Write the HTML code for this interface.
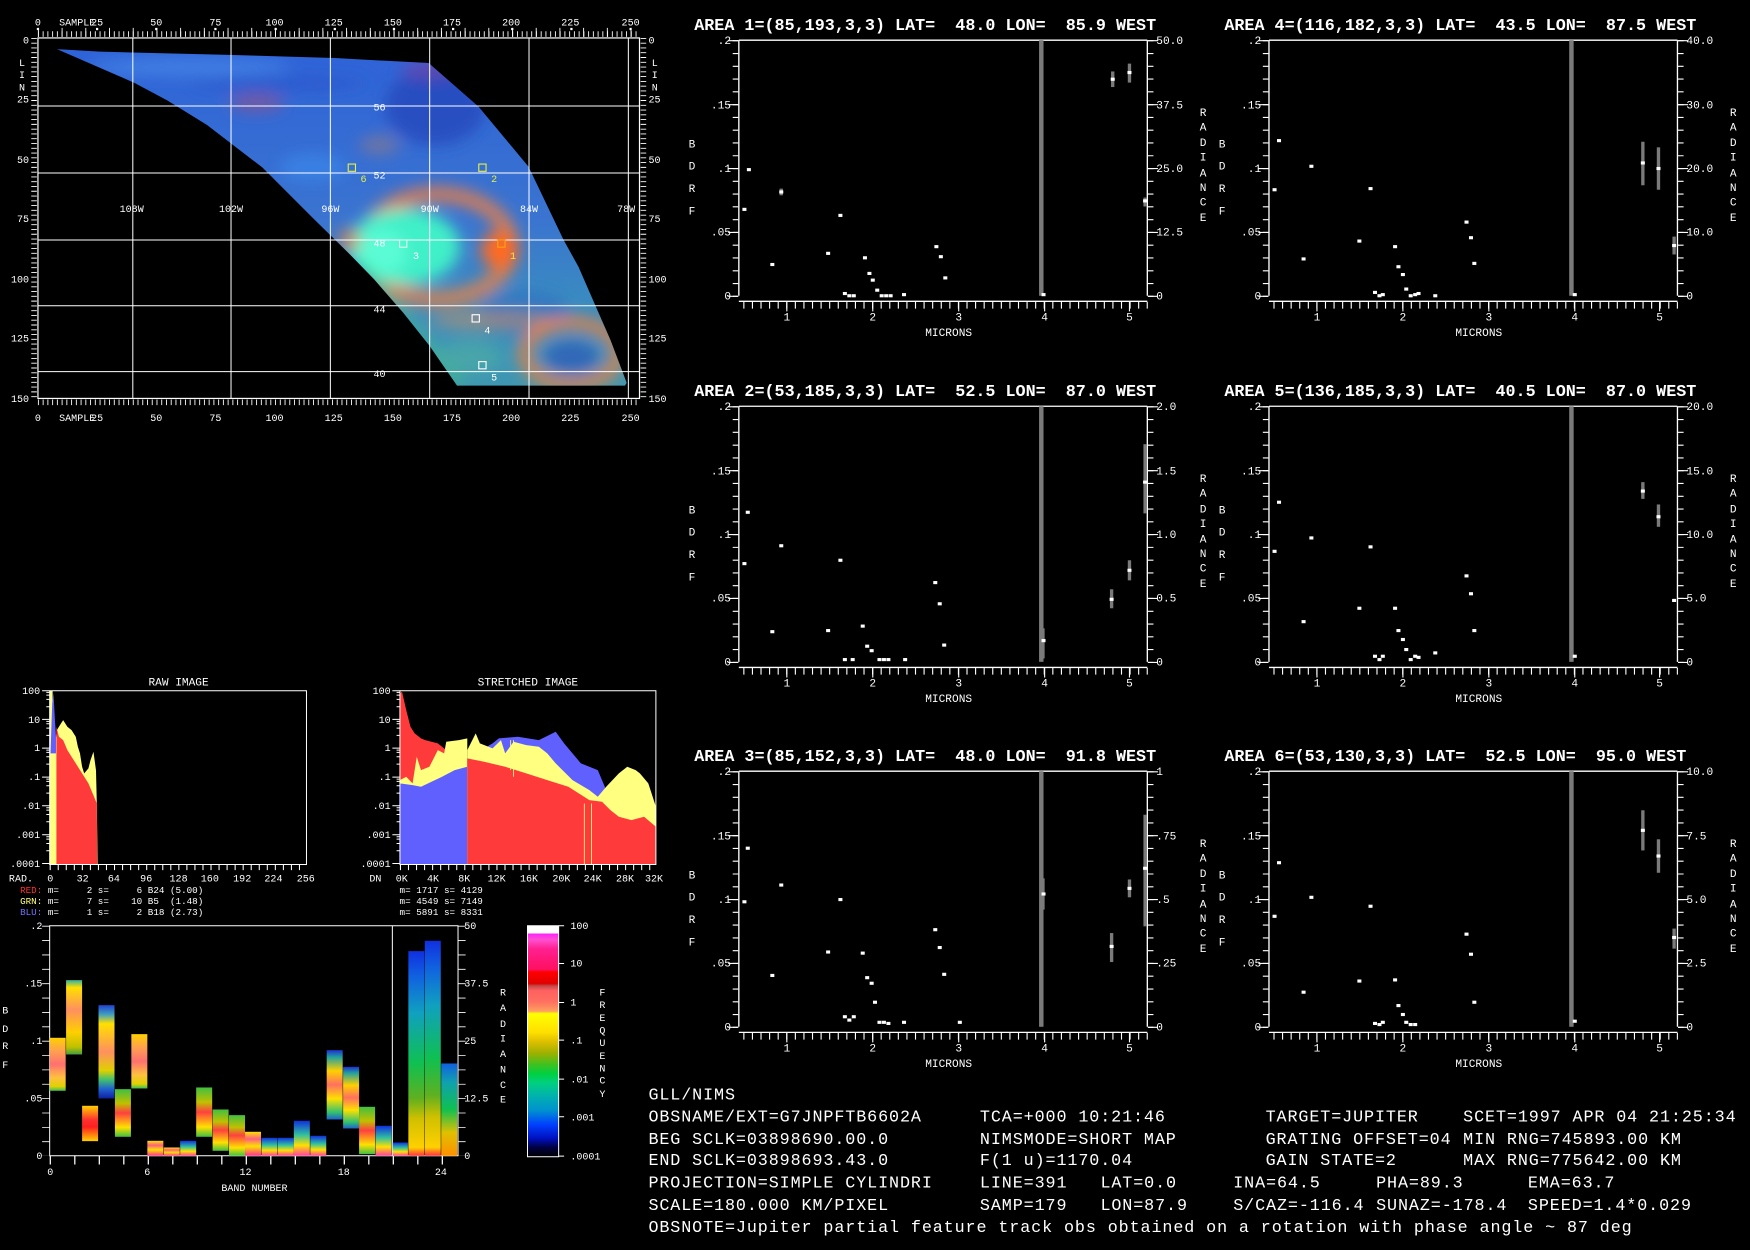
<!DOCTYPE html>
<html><head><meta charset="utf-8"><style>
html,body{margin:0;padding:0;background:#000;overflow:hidden}
svg{display:block}
text{font-family:"Liberation Mono",monospace;fill:#fff;white-space:pre}
.s{font-size:9px}
.m{font-size:10px}
.t{font-size:15px;font-weight:bold}
.b{font-size:15px}
</style></head><body>
<svg width="1750" height="1250" viewBox="0 0 1568 1120" preserveAspectRatio="none" xmlns="http://www.w3.org/2000/svg" xml:space="preserve">
<defs>
<filter id="bl" x="-50%" y="-50%" width="200%" height="200%"><feGaussianBlur stdDeviation="7"/></filter>
<clipPath id="cres"><path d="M51,44 L89.6,46.3 200,49 300,52 384,56.5 428.8,95.6 473.6,149.4 505,215 518.3,239 547,304.7 561.5,343 560,345.5 409.5,345.5 385,310 361.5,280.5 335,250 313.6,228 281,196 235,150 185.5,112 150,90 120,74 Z"/></clipPath>
<linearGradient id="mapg" gradientUnits="userSpaceOnUse" x1="0" y1="40" x2="0" y2="350">
<stop offset="0" stop-color="#2e62d8"/><stop offset=".5" stop-color="#3a74d0"/><stop offset=".75" stop-color="#3a8cc0"/><stop offset="1" stop-color="#3e98b0"/></linearGradient>
<rect id="pt" x="-1.8" y="-1.4" width="3.6" height="2.8" fill="#fff"/>
<g id="pf" stroke="#fff" fill="none">
<path d="M662,36H1028M662,36V265M1028,36V265M662,270H1028" stroke-width="1.2"/>
<path d="M659,36V266" stroke-width="5" stroke-dasharray="1 10.45"/>
<path d="M657,36V266" stroke-width="9" stroke-dasharray="1 56.25"/>
<path d="M1031,36V266" stroke-width="5" stroke-dasharray="1 10.45"/>
<path d="M1033,36V266" stroke-width="9" stroke-dasharray="1 56.25"/>
<path d="M666,273.5H1029" stroke-width="6" stroke-dasharray="1 6.69"/>
<path d="M705,270V279M782,270V279M859,270V279M936,270V279M1012,270V279" stroke-width="1"/>
<rect x="931" y="36" width="4" height="229" fill="#7a7a7a" stroke="none"/>
<g stroke="none" fill="#fff">
<text class="m" x="655" y="39.5" text-anchor="end">.2</text>
<text class="m" x="655" y="97" text-anchor="end">.15</text>
<text class="m" x="655" y="154" text-anchor="end">.1</text>
<text class="m" x="655" y="211" text-anchor="end">.05</text>
<text class="m" x="655" y="268.5" text-anchor="end">0</text>
<text class="m" x="617" y="132">B</text><text class="m" x="617" y="152">D</text><text class="m" x="617" y="172">R</text><text class="m" x="617" y="192">F</text>
<text class="m" x="705" y="287" text-anchor="middle">1</text><text class="m" x="782" y="287" text-anchor="middle">2</text><text class="m" x="859" y="287" text-anchor="middle">3</text><text class="m" x="936" y="287" text-anchor="middle">4</text><text class="m" x="1012" y="287" text-anchor="middle">5</text>
<text class="m" x="850" y="301" text-anchor="middle">MICRONS</text>
<text class="m" x="1075" y="104">R</text><text class="m" x="1075" y="117">A</text><text class="m" x="1075" y="131">D</text><text class="m" x="1075" y="144">I</text><text class="m" x="1075" y="158">A</text><text class="m" x="1075" y="171">N</text><text class="m" x="1075" y="184">C</text><text class="m" x="1075" y="198">E</text>
</g></g>
<linearGradient id="cb" x1="0" y1="0" x2="0" y2="1">
<stop offset="0" stop-color="#fff"/><stop offset=".033" stop-color="#fff"/><stop offset=".034" stop-color="#ff20ff"/><stop offset=".06" stop-color="#ff50d0"/><stop offset=".1" stop-color="#ff2090"/><stop offset=".19" stop-color="#ff1060"/><stop offset=".2" stop-color="#ff0000"/><stop offset=".25" stop-color="#e00000"/><stop offset=".26" stop-color="#c04848"/><stop offset=".28" stop-color="#ff6060"/><stop offset=".33" stop-color="#ff7060"/><stop offset=".37" stop-color="#ffa060"/><stop offset=".38" stop-color="#ffff00"/><stop offset=".46" stop-color="#ffe000"/><stop offset=".5" stop-color="#e0c000"/><stop offset=".55" stop-color="#a0b000"/><stop offset=".6" stop-color="#40c020"/><stop offset=".64" stop-color="#00d040"/><stop offset=".68" stop-color="#00d080"/><stop offset=".74" stop-color="#00b0b0"/><stop offset=".8" stop-color="#0090d0"/><stop offset=".86" stop-color="#0040ff"/><stop offset=".92" stop-color="#0010c0"/><stop offset=".96" stop-color="#000040"/><stop offset="1" stop-color="#000"/></linearGradient>
<linearGradient id="gW" x1="0" y1="0" x2="0" y2="1"><stop offset="0" stop-color="#ffd000"/><stop offset=".25" stop-color="#ffa050"/><stop offset=".5" stop-color="#ff7070"/><stop offset=".75" stop-color="#ffc040"/><stop offset=".92" stop-color="#e0d000"/><stop offset="1" stop-color="#30c060"/></linearGradient>
<linearGradient id="g1" x1="0" y1="0" x2="0" y2="1"><stop offset="0" stop-color="#30b0a0"/><stop offset=".1" stop-color="#ffe000"/><stop offset=".4" stop-color="#ff9060"/><stop offset=".7" stop-color="#ffd000"/><stop offset=".9" stop-color="#c0c000"/><stop offset="1" stop-color="#40a040"/></linearGradient>
<linearGradient id="g3" x1="0" y1="0" x2="0" y2="1"><stop offset="0" stop-color="#2040d0"/><stop offset=".1" stop-color="#40a0c0"/><stop offset=".2" stop-color="#ffe000"/><stop offset=".5" stop-color="#ff9060"/><stop offset=".7" stop-color="#e0d000"/><stop offset=".8" stop-color="#40c070"/><stop offset=".9" stop-color="#2060d0"/><stop offset="1" stop-color="#1020a0"/></linearGradient>
<linearGradient id="gRY" x1="0" y1="0" x2="0" y2="1"><stop offset="0" stop-color="#ffd000"/><stop offset=".4" stop-color="#ff3030"/><stop offset=".6" stop-color="#ff2020"/><stop offset="1" stop-color="#ffd000"/></linearGradient>
<linearGradient id="gL" x1="0" y1="0" x2="0" y2="1"><stop offset="0" stop-color="#ffe000"/><stop offset=".3" stop-color="#ff6080"/><stop offset=".6" stop-color="#ffe000"/><stop offset="1" stop-color="#ff3090"/></linearGradient>
<linearGradient id="gG" x1="0" y1="0" x2="0" y2="1"><stop offset="0" stop-color="#40c040"/><stop offset=".3" stop-color="#c0c000"/><stop offset=".5" stop-color="#ff4040"/><stop offset=".8" stop-color="#ffe000"/><stop offset="1" stop-color="#40c040"/></linearGradient>
<linearGradient id="gBs" x1="0" y1="0" x2="0" y2="1"><stop offset="0" stop-color="#1030e0"/><stop offset=".4" stop-color="#30c0a0"/><stop offset=".7" stop-color="#ffe000"/><stop offset="1" stop-color="#ff40a0"/></linearGradient>
<linearGradient id="gT" x1="0" y1="0" x2="0" y2="1"><stop offset="0" stop-color="#1030e0"/><stop offset=".12" stop-color="#1060e0"/><stop offset=".3" stop-color="#10a0c0"/><stop offset=".55" stop-color="#10c050"/><stop offset=".72" stop-color="#60b020"/><stop offset=".82" stop-color="#d0c000"/><stop offset=".96" stop-color="#ffd000"/><stop offset="1" stop-color="#ff3040"/></linearGradient>
<linearGradient id="g24" x1="0" y1="0" x2="0" y2="1"><stop offset="0" stop-color="#1060e0"/><stop offset=".2" stop-color="#10a0b0"/><stop offset=".5" stop-color="#10c050"/><stop offset=".75" stop-color="#e0c000"/><stop offset="1" stop-color="#ff9000"/></linearGradient>
<linearGradient id="g17" x1="0" y1="0" x2="0" y2="1"><stop offset="0" stop-color="#2030d0"/><stop offset=".1" stop-color="#20a0a0"/><stop offset=".3" stop-color="#ffd000"/><stop offset=".5" stop-color="#ff7060"/><stop offset=".7" stop-color="#ffe000"/><stop offset=".9" stop-color="#30c070"/><stop offset="1" stop-color="#2060d0"/></linearGradient>
</defs>
<rect width="1568" height="1120" fill="#000"/>

<g clip-path="url(#cres)">
<rect x="40" y="40" width="540" height="320" fill="url(#mapg)"/>
<g filter="url(#bl)">
<ellipse cx="170" cy="60" rx="90" ry="8" fill="#4a8ae8" opacity=".7"/>
<ellipse cx="250" cy="75" rx="80" ry="6" fill="#2850c8" opacity=".6"/>
<ellipse cx="230" cy="92" rx="25" ry="8" fill="#a05080" opacity=".6"/>
<ellipse cx="390" cy="95" rx="45" ry="35" fill="#2444b8" opacity=".7"/>
<ellipse cx="385" cy="62" rx="25" ry="8" fill="#8040a0" opacity=".6"/>
<ellipse cx="340" cy="130" rx="18" ry="8" fill="#b08070" opacity=".5"/>
<ellipse cx="280" cy="150" rx="30" ry="12" fill="#3c8cf0" opacity=".6"/>
<ellipse cx="392" cy="221" rx="66" ry="47" fill="none" stroke="#f08040" stroke-width="13" opacity=".9"/>
<ellipse cx="362" cy="221" rx="50" ry="34" fill="#40f0c8"/>
<ellipse cx="340" cy="226" rx="25" ry="20" fill="#60ffd8" opacity=".8"/>
<ellipse cx="448" cy="224" rx="17" ry="17" fill="#ff6a20"/>
<ellipse cx="313" cy="215" rx="10" ry="10" fill="#e08040" opacity=".8"/>
<ellipse cx="470" cy="280" rx="40" ry="20" fill="#3070c0" opacity=".7"/>
<ellipse cx="440" cy="287" rx="55" ry="8" fill="#d09060" opacity=".6"/>
<ellipse cx="512" cy="317" rx="42" ry="28" fill="none" stroke="#f08040" stroke-width="10"/>
<ellipse cx="512" cy="320" rx="25" ry="15" fill="#3068b8"/>
<path d="M320,235 L412,345" stroke="#40d070" stroke-width="10" opacity=".5"/>
<ellipse cx="420" cy="320" rx="30" ry="15" fill="#50b0a0" opacity=".6"/>
</g>
</g>
<g stroke="#fff" stroke-width=".9" fill="none">
<rect x="34" y="34" width="539" height="323" stroke-width="1.1"/>
<path d="M119,34V357M207,34V357M296,34V357M385,34V357M474,34V357M563,34V357"/>
<path d="M34,95H573M34,155H573M34,215H573M34,274H573M34,333H573"/>
<path d="M34,30.5H573" stroke-width="5" stroke-dasharray=".8 3.45"/>
<path d="M34,29H573" stroke-width="8" stroke-dasharray=".8 20.44"/>
<path d="M34,360.5H573" stroke-width="5" stroke-dasharray=".8 3.45"/>
<path d="M30.5,34V357" stroke-width="5" stroke-dasharray=".8 3.48"/>
<path d="M576.5,34V357" stroke-width="5" stroke-dasharray=".8 3.48"/>
</g>
<g fill="#fff">
<rect x="33" y="25" width="2" height="2"/><rect x="86" y="25" width="2" height="2"/><rect x="139" y="25" width="2" height="2"/><rect x="192" y="25" width="2" height="2"/><rect x="246" y="25" width="2" height="2"/><rect x="299" y="25" width="2" height="2"/><rect x="352" y="25" width="2" height="2"/><rect x="405" y="25" width="2" height="2"/><rect x="458" y="25" width="2" height="2"/><rect x="511" y="25" width="2" height="2"/><rect x="564" y="25" width="2" height="2"/>
</g>
<g class="s">
<text class="s" x="34" y="23" text-anchor="middle">0</text><text class="s" x="53" y="23">SAMPLE</text><text class="s" x="87" y="23" text-anchor="middle">25</text><text class="s" x="140" y="23" text-anchor="middle">50</text><text class="s" x="193" y="23" text-anchor="middle">75</text><text class="s" x="246" y="23" text-anchor="middle">100</text><text class="s" x="299" y="23" text-anchor="middle">125</text><text class="s" x="352" y="23" text-anchor="middle">150</text><text class="s" x="405" y="23" text-anchor="middle">175</text><text class="s" x="458" y="23" text-anchor="middle">200</text><text class="s" x="511" y="23" text-anchor="middle">225</text><text class="s" x="565" y="23" text-anchor="middle">250</text>
<text class="s" x="34" y="377" text-anchor="middle">0</text><text class="s" x="53" y="377">SAMPLE</text><text class="s" x="87" y="377" text-anchor="middle">25</text><text class="s" x="140" y="377" text-anchor="middle">50</text><text class="s" x="193" y="377" text-anchor="middle">75</text><text class="s" x="246" y="377" text-anchor="middle">100</text><text class="s" x="299" y="377" text-anchor="middle">125</text><text class="s" x="352" y="377" text-anchor="middle">150</text><text class="s" x="405" y="377" text-anchor="middle">175</text><text class="s" x="458" y="377" text-anchor="middle">200</text><text class="s" x="511" y="377" text-anchor="middle">225</text><text class="s" x="565" y="377" text-anchor="middle">250</text>
<text class="s" x="26" y="39" text-anchor="end">0</text><text class="s" x="26" y="92" text-anchor="end">25</text><text class="s" x="26" y="146" text-anchor="end">50</text><text class="s" x="26" y="199" text-anchor="end">75</text><text class="s" x="26" y="253" text-anchor="end">100</text><text class="s" x="26" y="306" text-anchor="end">125</text><text class="s" x="26" y="360" text-anchor="end">150</text>
<text class="s" x="17" y="59">L</text><text class="s" x="17" y="70">I</text><text class="s" x="17" y="81">N</text>
<text class="s" x="581" y="39">0</text><text class="s" x="581" y="92">25</text><text class="s" x="581" y="146">50</text><text class="s" x="581" y="199">75</text><text class="s" x="581" y="253">100</text><text class="s" x="581" y="306">125</text><text class="s" x="581" y="360">150</text>
<text class="s" x="584" y="59">L</text><text class="s" x="584" y="70">I</text><text class="s" x="584" y="81">N</text>
<text class="s" x="118" y="190" text-anchor="middle">108W</text><text class="s" x="207" y="190" text-anchor="middle">102W</text><text class="s" x="296" y="190" text-anchor="middle">96W</text><text class="s" x="385" y="190" text-anchor="middle">90W</text><text class="s" x="474" y="190" text-anchor="middle">84W</text><text class="s" x="561" y="190" text-anchor="middle">78W</text>
<text class="s" x="340" y="99" text-anchor="middle">56</text><text class="s" x="340" y="160" text-anchor="middle">52</text><text class="s" x="340" y="221" text-anchor="middle">48</text><text class="s" x="340" y="280" text-anchor="middle">44</text><text class="s" x="340" y="338" text-anchor="middle">40</text>
</g>
<g fill="none" stroke-width="1">
<rect x="312" y="147" width="6.5" height="6.5" stroke="#e8f040"/>
<rect x="429" y="147" width="6.5" height="6.5" stroke="#e8f040"/>
<rect x="358" y="215" width="6.5" height="6.5" stroke="#e0ffe8"/>
<rect x="446" y="215" width="6.5" height="6.5" stroke="#ffa010"/>
<rect x="423" y="282" width="6.5" height="6.5" stroke="#fff"/>
<rect x="429" y="324" width="6.5" height="6.5" stroke="#fff"/>
</g>
<text class="s" x="323" y="163" style="fill:#e8f040">6</text>
<text class="s" x="440" y="163" style="fill:#e8f040">2</text>
<text class="s" x="370" y="232">3</text>
<text class="s" x="457" y="232" style="fill:#ffe040">1</text>
<text class="s" x="434" y="299">4</text>
<text class="s" x="440" y="341">5</text>

<use href="#pf"/>
<use href="#pf" x="475"/>
<use href="#pf" y="328"/>
<use href="#pf" x="475" y="328"/>
<use href="#pf" y="655"/>
<use href="#pf" x="475" y="655"/>

<text class="t" x="622" y="27">AREA 1=(85,193,3,3) LAT=  48.0 LON=  85.9 WEST</text>
<text class="t" x="1097" y="27">AREA 4=(116,182,3,3) LAT=  43.5 LON=  87.5 WEST</text>
<text class="t" x="622" y="355">AREA 2=(53,185,3,3) LAT=  52.5 LON=  87.0 WEST</text>
<text class="t" x="1097" y="355">AREA 5=(136,185,3,3) LAT=  40.5 LON=  87.0 WEST</text>
<text class="t" x="622" y="682">AREA 3=(85,152,3,3) LAT=  48.0 LON=  91.8 WEST</text>
<text class="t" x="1097" y="682">AREA 6=(53,130,3,3) LAT=  52.5 LON=  95.0 WEST</text>

<g class="m">
<text class="m" x="1036" y="39.5">50.0</text><text class="m" x="1036" y="97">37.5</text><text class="m" x="1036" y="154">25.0</text><text class="m" x="1036" y="211">12.5</text><text class="m" x="1036" y="268.5">0</text>
<text class="m" x="1511" y="39.5">40.0</text><text class="m" x="1511" y="97">30.0</text><text class="m" x="1511" y="154">20.0</text><text class="m" x="1511" y="211">10.0</text><text class="m" x="1511" y="268.5">0</text>
<text class="m" x="1036" y="367.5">2.0</text><text class="m" x="1036" y="425">1.5</text><text class="m" x="1036" y="482">1.0</text><text class="m" x="1036" y="539">0.5</text><text class="m" x="1036" y="596.5">0</text>
<text class="m" x="1511" y="367.5">20.0</text><text class="m" x="1511" y="425">15.0</text><text class="m" x="1511" y="482">10.0</text><text class="m" x="1511" y="539">5.0</text><text class="m" x="1511" y="596.5">0</text>
<text class="m" x="1036" y="694.5">1</text><text class="m" x="1036" y="752">.75</text><text class="m" x="1036" y="809">.5</text><text class="m" x="1036" y="866">.25</text><text class="m" x="1036" y="923.5">0</text>
<text class="m" x="1511" y="694.5">10.0</text><text class="m" x="1511" y="752">7.5</text><text class="m" x="1511" y="809">5.0</text><text class="m" x="1511" y="866">2.5</text><text class="m" x="1511" y="923.5">0</text>
</g>

<g fill="#7a7a7a">
<rect x="995.5" y="64" width="3" height="14"/><rect x="1010.5" y="57" width="3" height="17"/><rect x="1024.5" y="177" width="3" height="8"/><rect x="698.5" y="169" width="3" height="6"/>
<rect x="1470.5" y="127" width="3" height="39"/><rect x="1484.5" y="132" width="3" height="38"/><rect x="1498.5" y="212" width="3" height="16"/>
<rect x="933" y="563" width="3" height="27"/><rect x="994.5" y="528" width="3" height="17"/><rect x="1010.5" y="502" width="3" height="18"/><rect x="1024.5" y="398" width="3" height="62"/>
<rect x="1470.5" y="432" width="3" height="15"/><rect x="1484.5" y="452" width="3" height="20"/>
<rect x="933" y="787" width="3" height="28"/><rect x="994.5" y="836" width="3" height="26"/><rect x="1010.5" y="788" width="3" height="16"/><rect x="1024.5" y="730" width="3" height="100"/>
<rect x="1470.5" y="726" width="3" height="36"/><rect x="1484.5" y="752" width="3" height="30"/><rect x="1498.5" y="832" width="3" height="18"/>
</g>
<g>
<use href="#pt" x="667" y="187.6"/><use href="#pt" x="671" y="152"/><use href="#pt" x="692" y="237"/><use href="#pt" x="700" y="172"/><use href="#pt" x="742" y="227"/><use href="#pt" x="753" y="193"/><use href="#pt" x="757" y="263"/><use href="#pt" x="761" y="265"/><use href="#pt" x="765" y="265"/><use href="#pt" x="775" y="231"/><use href="#pt" x="779" y="245"/><use href="#pt" x="782" y="251"/><use href="#pt" x="786" y="260"/><use href="#pt" x="790" y="265"/><use href="#pt" x="794" y="265"/><use href="#pt" x="798" y="265"/><use href="#pt" x="810" y="264"/><use href="#pt" x="839" y="221"/><use href="#pt" x="843" y="230"/><use href="#pt" x="847" y="249"/><use href="#pt" x="935" y="264"/><use href="#pt" x="997" y="71"/><use href="#pt" x="1012" y="65"/><use href="#pt" x="1026" y="180"/>
<use href="#pt" x="1142" y="170"/><use href="#pt" x="1146" y="126"/><use href="#pt" x="1168" y="232"/><use href="#pt" x="1175" y="149"/><use href="#pt" x="1218" y="216"/><use href="#pt" x="1228" y="169"/><use href="#pt" x="1232" y="262"/><use href="#pt" x="1236" y="265"/><use href="#pt" x="1239" y="264"/><use href="#pt" x="1250" y="221"/><use href="#pt" x="1253" y="239"/><use href="#pt" x="1257" y="246"/><use href="#pt" x="1260" y="259"/><use href="#pt" x="1264" y="265"/><use href="#pt" x="1268" y="264"/><use href="#pt" x="1271" y="263"/><use href="#pt" x="1286" y="265"/><use href="#pt" x="1314" y="199"/><use href="#pt" x="1318" y="213"/><use href="#pt" x="1321" y="236"/><use href="#pt" x="1411" y="264"/><use href="#pt" x="1472" y="146"/><use href="#pt" x="1486" y="151"/><use href="#pt" x="1500" y="220"/>
<use href="#pt" x="667" y="505"/><use href="#pt" x="670" y="459"/><use href="#pt" x="692" y="566"/><use href="#pt" x="700" y="489"/><use href="#pt" x="742" y="565"/><use href="#pt" x="753" y="502"/><use href="#pt" x="757" y="591"/><use href="#pt" x="764" y="591"/><use href="#pt" x="773" y="561"/><use href="#pt" x="777" y="579"/><use href="#pt" x="781" y="583"/><use href="#pt" x="788" y="591"/><use href="#pt" x="792" y="591"/><use href="#pt" x="796" y="591"/><use href="#pt" x="811" y="591"/><use href="#pt" x="838" y="522"/><use href="#pt" x="842" y="541"/><use href="#pt" x="846" y="578"/><use href="#pt" x="935" y="574"/><use href="#pt" x="996" y="537"/><use href="#pt" x="1012" y="511"/><use href="#pt" x="1026" y="432"/>
<use href="#pt" x="1142" y="494"/><use href="#pt" x="1146" y="450"/><use href="#pt" x="1168" y="557"/><use href="#pt" x="1175" y="482"/><use href="#pt" x="1218" y="545"/><use href="#pt" x="1228" y="490"/><use href="#pt" x="1232" y="588"/><use href="#pt" x="1236" y="591"/><use href="#pt" x="1239" y="588"/><use href="#pt" x="1250" y="545"/><use href="#pt" x="1253" y="565"/><use href="#pt" x="1257" y="573"/><use href="#pt" x="1260" y="582"/><use href="#pt" x="1264" y="591"/><use href="#pt" x="1268" y="588"/><use href="#pt" x="1271" y="589"/><use href="#pt" x="1286" y="585"/><use href="#pt" x="1314" y="516"/><use href="#pt" x="1318" y="532"/><use href="#pt" x="1321" y="565"/><use href="#pt" x="1411" y="588"/><use href="#pt" x="1472" y="440"/><use href="#pt" x="1486" y="463"/><use href="#pt" x="1500" y="538"/>
<use href="#pt" x="667" y="808"/><use href="#pt" x="670" y="760"/><use href="#pt" x="692" y="874"/><use href="#pt" x="700" y="793"/><use href="#pt" x="742" y="853"/><use href="#pt" x="753" y="806"/><use href="#pt" x="757" y="911"/><use href="#pt" x="761" y="914"/><use href="#pt" x="765" y="911"/><use href="#pt" x="773" y="854"/><use href="#pt" x="777" y="876"/><use href="#pt" x="781" y="881"/><use href="#pt" x="784" y="898"/><use href="#pt" x="788" y="916"/><use href="#pt" x="792" y="916"/><use href="#pt" x="796" y="917"/><use href="#pt" x="810" y="916"/><use href="#pt" x="838" y="833"/><use href="#pt" x="842" y="849"/><use href="#pt" x="846" y="873"/><use href="#pt" x="860" y="916"/><use href="#pt" x="935" y="801"/><use href="#pt" x="996" y="848"/><use href="#pt" x="1012" y="796"/><use href="#pt" x="1026" y="778"/>
<use href="#pt" x="1142" y="821"/><use href="#pt" x="1146" y="773"/><use href="#pt" x="1168" y="889"/><use href="#pt" x="1175" y="804"/><use href="#pt" x="1218" y="879"/><use href="#pt" x="1228" y="812"/><use href="#pt" x="1232" y="917"/><use href="#pt" x="1236" y="918"/><use href="#pt" x="1239" y="916"/><use href="#pt" x="1250" y="878"/><use href="#pt" x="1253" y="901"/><use href="#pt" x="1257" y="909"/><use href="#pt" x="1260" y="916"/><use href="#pt" x="1264" y="918"/><use href="#pt" x="1268" y="918"/><use href="#pt" x="1314" y="837"/><use href="#pt" x="1318" y="855"/><use href="#pt" x="1321" y="898"/><use href="#pt" x="1411" y="915"/><use href="#pt" x="1472" y="744"/><use href="#pt" x="1486" y="767"/><use href="#pt" x="1500" y="840"/>
</g>

<g transform="translate(0,600.4) scale(0.3772,0.2987)">
<polygon fill="#ffff80" points="118,583 118,62 125,62 125,240 130,240 135,180 145,160 150,150 160,170 170,180 180,200 185,230 190,250 195,290 200,310 210,295 215,270 222,245 228,300 230,400 232,583"/>
<polygon fill="#ff3a3a" points="134,583 134,170 140,200 150,210 160,240 170,260 180,280 190,300 200,320 210,340 220,370 230,400 231,583"/>
<polygon fill="#6060ff" points="120,250 124,100 127,68 130,140 133,200 133,250"/>
<polygon fill="#ff3a3a" points="950,583 950,70 955,65 965,120 975,170 985,190 1000,205 1010,210 1040,220 1060,240 1080,255 1110,265 1110,583"/>
<polygon fill="#ffff80" points="950,583 950,330 965,320 980,340 990,260 1000,300 1020,290 1040,240 1055,250 1060,215 1090,210 1110,205 1110,583"/>
<polygon fill="#6060ff" points="950,583 950,340 980,345 1000,350 1050,320 1080,300 1110,290 1113,583"/>
<polygon fill="#6060ff" points="1110,583 1110,265 1170,220 1185,205 1230,200 1280,210 1320,185 1340,220 1380,280 1420,300 1440,360 1460,430 1490,470 1530,520 1545,560 1558,583"/>
<polygon fill="#ffff80" points="1110,583 1110,240 1130,190 1140,220 1170,235 1190,210 1200,250 1220,215 1250,225 1280,230 1300,250 1320,280 1360,330 1400,360 1420,380 1440,350 1470,310 1490,290 1510,300 1520,310 1540,340 1558,410 1558,583"/>
<polygon fill="#ff3a3a" points="1110,583 1110,265 1150,275 1200,290 1250,310 1300,330 1350,350 1400,390 1430,395 1450,420 1470,440 1500,450 1530,440 1558,470 1558,583"/>
<g stroke="#ffff80" stroke-width="2"><path d="M1388,400V583M1405,400V583M1213,210V300M1220,210V320"/></g>
<g fill="none" stroke="#fff">
<rect x="118" y="62" width="610" height="521" vector-effect="non-scaling-stroke"/>
<rect x="950" y="62" width="608" height="521" vector-effect="non-scaling-stroke"/>
<path d="M100,62H118M100,148H118M100,234H118M100,321H118M100,407H118M100,494H118M100,580H118M932,62H950M932,148H950M932,234H950M932,321H950M932,407H950M932,494H950M932,580H950" vector-effect="non-scaling-stroke"/>
<path d="M110,67H118M110,75H118M110,88H118M110,110H118M110,154H118M110,161H118M110,174H118M110,196H118M110,240H118M110,247H118M110,260H118M110,282H118M110,327H118M110,334H118M110,347H118M110,369H118M110,413H118M110,420H118M110,433H118M110,455H118M110,500H118M110,507H118M110,520H118M110,542H118M942,67H950M942,75H950M942,88H950M942,110H950M942,154H950M942,161H950M942,174H950M942,196H950M942,240H950M942,247H950M942,260H950M942,282H950M942,327H950M942,334H950M942,347H950M942,369H950M942,413H950M942,420H950M942,433H950M942,455H950M942,500H950M942,507H950M942,520H950M942,542H950" vector-effect="non-scaling-stroke"/>
<path d="M118,591H728" stroke-width="18" stroke-dasharray="2.5 16.6"/>
<path d="M950,591H1558" stroke-width="18" stroke-dasharray="2.5 16.6"/>
<rect x="118" y="767" width="970" height="690" vector-effect="non-scaling-stroke"/>
<path d="M932,767V1457" vector-effect="non-scaling-stroke"/>
<path d="M109,767V1457" stroke-width="18" stroke-dasharray="2.5 40.6"/>
<path d="M1097,767V1457" stroke-width="18" stroke-dasharray="2.5 40.6"/>
<path d="M118,1470H1088" stroke-width="26" stroke-dasharray="3 55.2"/>
<rect x="1253" y="767" width="74" height="693" fill="url(#cb)" vector-effect="non-scaling-stroke"/>
<path d="M1327,767H1340M1327,880H1340M1327,997H1340M1327,1110H1340M1327,1227H1340M1327,1340H1340M1327,1458H1340" vector-effect="non-scaling-stroke"/>
</g>
<rect x="118" y="1103" width="38" height="159" fill="url(#gW)"/>
<rect x="157" y="930" width="38" height="223" fill="url(#g1)"/>
<rect x="195" y="1307" width="38" height="106" fill="url(#gRY)"/>
<rect x="234" y="1005" width="38" height="280" fill="url(#g3)"/>
<rect x="273" y="1257" width="38" height="143" fill="url(#gG)"/>
<rect x="312" y="1092" width="38" height="163" fill="url(#gW)"/>
<rect x="350" y="1412" width="38" height="45" fill="url(#gL)"/>
<rect x="389" y="1432" width="38" height="25" fill="url(#gL)"/>
<rect x="428" y="1412" width="38" height="45" fill="url(#gBs)"/>
<rect x="466" y="1252" width="38" height="148" fill="url(#gG)"/>
<rect x="505" y="1318" width="38" height="124" fill="url(#gG)"/>
<rect x="544" y="1335" width="38" height="122" fill="url(#gG)"/>
<rect x="582" y="1385" width="38" height="72" fill="url(#gL)"/>
<rect x="621" y="1403" width="38" height="54" fill="url(#gBs)"/>
<rect x="660" y="1403" width="38" height="54" fill="url(#gBs)"/>
<rect x="698" y="1352" width="38" height="105" fill="url(#gBs)"/>
<rect x="737" y="1397" width="38" height="60" fill="url(#gBs)"/>
<rect x="776" y="1140" width="38" height="208" fill="url(#g17)"/>
<rect x="815" y="1190" width="38" height="185" fill="url(#g17)"/>
<rect x="853" y="1310" width="38" height="142" fill="url(#gG)"/>
<rect x="892" y="1367" width="38" height="90" fill="url(#gBs)"/>
<rect x="933" y="1417" width="36" height="40" fill="url(#gBs)"/>
<rect x="970" y="843" width="38" height="614" fill="url(#gT)"/>
<rect x="1009" y="812" width="38" height="645" fill="url(#gT)"/>
<rect x="1048" y="1180" width="38" height="277" fill="url(#g24)"/>
</g>

<g class="s">
<text class="m" x="160" y="614" text-anchor="middle">RAW IMAGE</text>
<text class="m" x="473" y="614" text-anchor="middle">STRETCHED IMAGE</text>
<text class="s" x="36" y="622" text-anchor="end">100</text><text class="s" x="36" y="648" text-anchor="end">10</text><text class="s" x="36" y="673" text-anchor="end">1</text><text class="s" x="36" y="699" text-anchor="end">.1</text><text class="s" x="36" y="725" text-anchor="end">.01</text><text class="s" x="36" y="751" text-anchor="end">.001</text><text class="s" x="36" y="777" text-anchor="end">.0001</text>
<text class="s" x="350" y="622" text-anchor="end">100</text><text class="s" x="350" y="648" text-anchor="end">10</text><text class="s" x="350" y="673" text-anchor="end">1</text><text class="s" x="350" y="699" text-anchor="end">.1</text><text class="s" x="350" y="725" text-anchor="end">.01</text><text class="s" x="350" y="751" text-anchor="end">.001</text><text class="s" x="350" y="777" text-anchor="end">.0001</text>
<text class="s" x="8" y="790">RAD.</text>
<text class="s" x="45" y="790" text-anchor="middle">0</text><text class="s" x="74" y="790" text-anchor="middle">32</text><text class="s" x="102" y="790" text-anchor="middle">64</text><text class="s" x="131" y="790" text-anchor="middle">96</text><text class="s" x="160" y="790" text-anchor="middle">128</text><text class="s" x="188" y="790" text-anchor="middle">160</text><text class="s" x="217" y="790" text-anchor="middle">192</text><text class="s" x="245" y="790" text-anchor="middle">224</text><text class="s" x="274" y="790" text-anchor="middle">256</text>
<text class="s" x="331" y="790">DN</text>
<text class="s" x="360" y="790" text-anchor="middle">0K</text><text class="s" x="388" y="790" text-anchor="middle">4K</text><text class="s" x="416" y="790" text-anchor="middle">8K</text><text class="s" x="445" y="790" text-anchor="middle">12K</text><text class="s" x="474" y="790" text-anchor="middle">16K</text><text class="s" x="503" y="790" text-anchor="middle">20K</text><text class="s" x="531" y="790" text-anchor="middle">24K</text><text class="s" x="560" y="790" text-anchor="middle">28K</text><text class="s" x="586" y="790" text-anchor="middle">32K</text>
<text x="18" y="800" style="font-size:8.3px"><tspan style="fill:#ff3030">RED:</tspan> m=     2 s=     6 B24 (5.00)</text>
<text x="18" y="810" style="font-size:8.3px"><tspan style="fill:#ffff80">GRN:</tspan> m=     7 s=    10 B5  (1.48)</text>
<text x="18" y="820" style="font-size:8.3px"><tspan style="fill:#7070ff">BLU:</tspan> m=     1 s=     2 B18 (2.73)</text>
<text x="358" y="800" style="font-size:8.3px">m= 1717 s= 4129</text>
<text x="358" y="810" style="font-size:8.3px">m= 4549 s= 7149</text>
<text x="358" y="820" style="font-size:8.3px">m= 5891 s= 8331</text>
<text class="s" x="38" y="832.5" text-anchor="end">.2</text><text class="s" x="38" y="884" text-anchor="end">.15</text><text class="s" x="38" y="935.6" text-anchor="end">.1</text><text class="s" x="38" y="987" text-anchor="end">.05</text><text class="s" x="38" y="1038.6" text-anchor="end">0</text>
<text class="s" x="416" y="832.5">50</text><text class="s" x="416" y="884">37.5</text><text class="s" x="416" y="935.6">25</text><text class="s" x="416" y="987">12.5</text><text class="s" x="416" y="1038.6">0</text>
<text class="s" x="2" y="908">B</text><text class="s" x="2" y="924.5">D</text><text class="s" x="2" y="940">R</text><text class="s" x="2" y="957">F</text>
<text class="s" x="448" y="892">R</text><text class="s" x="448" y="906">A</text><text class="s" x="448" y="920">D</text><text class="s" x="448" y="933">I</text><text class="s" x="448" y="947">A</text><text class="s" x="448" y="961">N</text><text class="s" x="448" y="975">C</text><text class="s" x="448" y="988">E</text>
<text class="s" x="45" y="1053" text-anchor="middle">0</text><text class="s" x="132" y="1053" text-anchor="middle">6</text><text class="s" x="220" y="1053" text-anchor="middle">12</text><text class="s" x="308" y="1053" text-anchor="middle">18</text><text class="s" x="395" y="1053" text-anchor="middle">24</text>
<text class="s" x="228" y="1067" text-anchor="middle">BAND NUMBER</text>
<text class="s" x="511" y="832.5">100</text><text class="s" x="511" y="866">10</text><text class="s" x="511" y="901">1</text><text class="s" x="511" y="935">.1</text><text class="s" x="511" y="970">.01</text><text class="s" x="511" y="1004">.001</text><text class="s" x="511" y="1039">.0001</text>
<text class="s" x="537" y="892">F</text><text class="s" x="537" y="903">R</text><text class="s" x="537" y="915">E</text><text class="s" x="537" y="926">Q</text><text class="s" x="537" y="937">U</text><text class="s" x="537" y="949">E</text><text class="s" x="537" y="960">N</text><text class="s" x="537" y="971">C</text><text class="s" x="537" y="983">Y</text>
</g>

<g class="b" style="letter-spacing:.8px">
<text class="b" x="581" y="985">GLL/NIMS</text>
<text class="b" x="581" y="1005">OBSNAME/EXT=G7JNPFTB6602A</text><text class="b" x="878" y="1005">TCA=+000 10:21:46</text><text class="b" x="1134" y="1005">TARGET=JUPITER</text><text class="b" x="1311" y="1005">SCET=1997 APR 04 21:25:34</text>
<text class="b" x="581" y="1025">BEG SCLK=03898690.00.0</text><text class="b" x="878" y="1025">NIMSMODE=SHORT MAP</text><text class="b" x="1134" y="1025">GRATING OFFSET=04</text><text class="b" x="1311" y="1025">MIN RNG=745893.00 KM</text>
<text class="b" x="581" y="1044">END SCLK=03898693.43.0</text><text class="b" x="878" y="1044">F(1 u)=1170.04</text><text class="b" x="1134" y="1044">GAIN STATE=2</text><text class="b" x="1311" y="1044">MAX RNG=775642.00 KM</text>
<text class="b" x="581" y="1064">PROJECTION=SIMPLE CYLINDRI</text><text class="b" x="878" y="1064">LINE=391</text><text class="b" x="986" y="1064">LAT=0.0</text><text class="b" x="1105" y="1064">INA=64.5</text><text class="b" x="1233" y="1064">PHA=89.3</text><text class="b" x="1369" y="1064">EMA=63.7</text>
<text class="b" x="581" y="1084">SCALE=180.000 KM/PIXEL</text><text class="b" x="878" y="1084">SAMP=179</text><text class="b" x="986" y="1084">LON=87.9</text><text class="b" x="1105" y="1084">S/CAZ=-116.4</text><text class="b" x="1233" y="1084">SUNAZ=-178.4</text><text class="b" x="1369" y="1084">SPEED=1.4*0.029</text>
<text class="b" x="581" y="1104">OBSNOTE=Jupiter partial feature track obs obtained on a rotation with phase angle ~ 87 deg</text>
</g>
</svg>
</body></html>
